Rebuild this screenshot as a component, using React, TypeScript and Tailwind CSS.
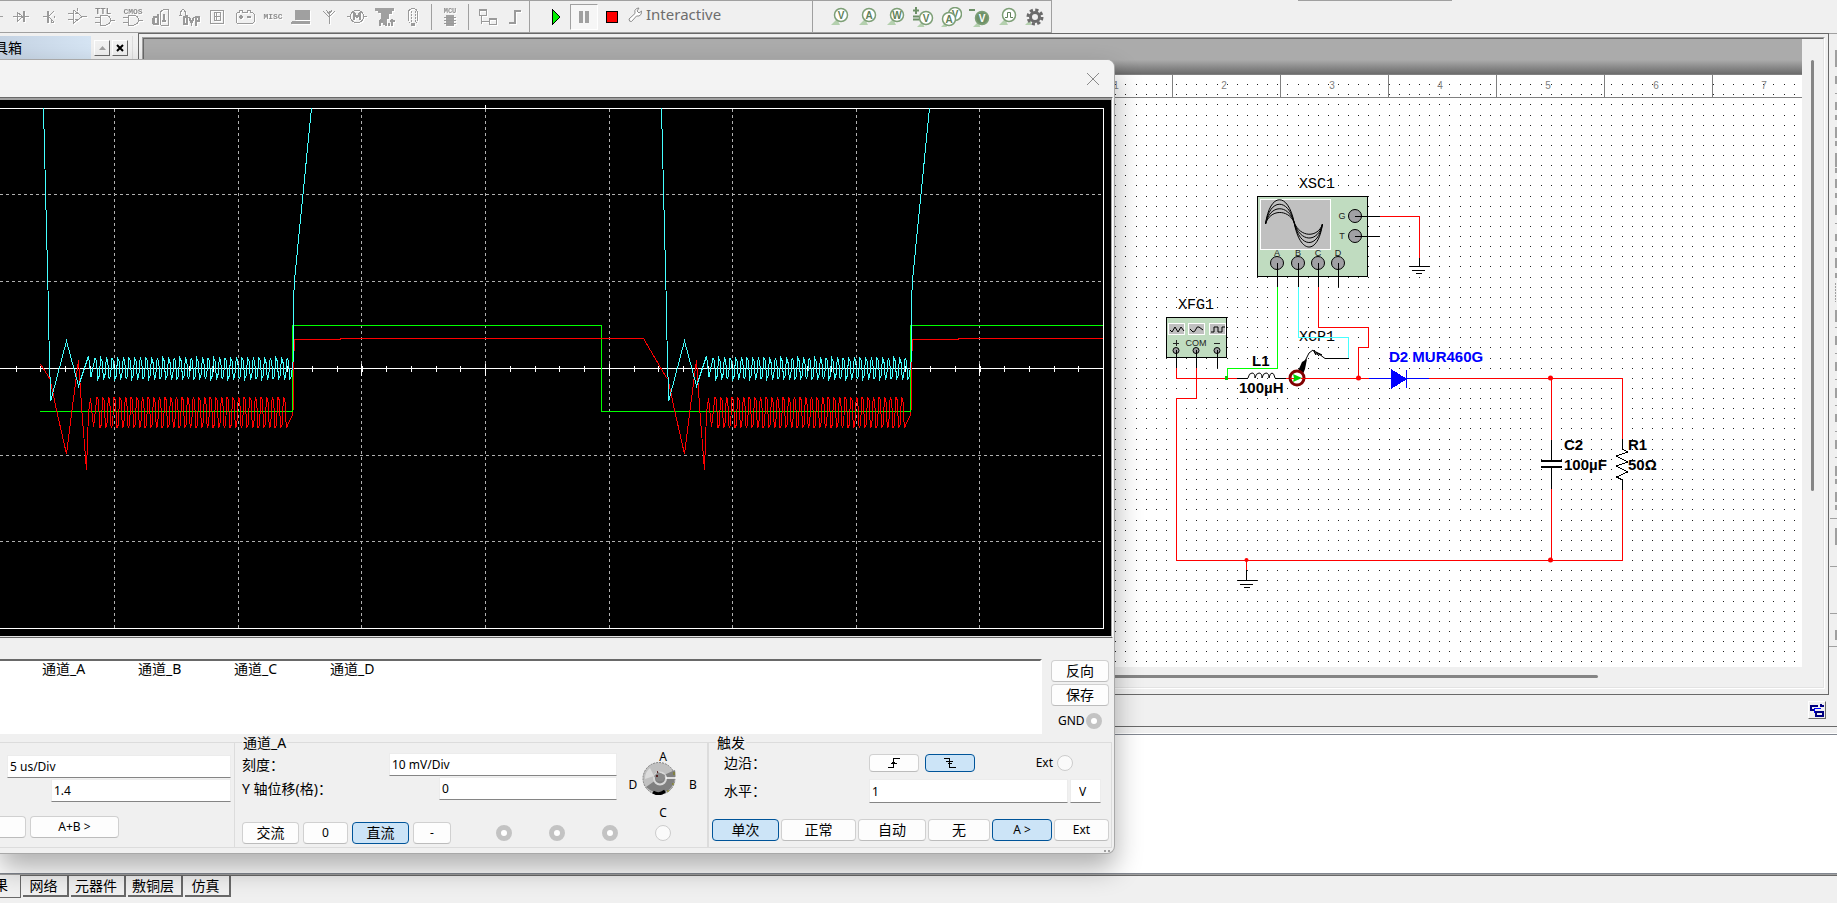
import React from 'react';
import clsx from 'clsx';

/* ---------- Toolbar icons (22 x 20, disabled look) ---------- */

const Glyph = ({ children }: { children: React.ReactNode }) => (
  <svg
    width="22"
    height="20"
    viewBox="0 0 22 20"
    fill="none"
    stroke="#9a9a9a"
    strokeWidth="1"
    shapeRendering="crispEdges"
    className="drop-shadow-[1px_1px_0_#fff]"
  >
    {children}
  </svg>
);

const glyphText = {
  fill: '#8c8c8c',
  stroke: 'none',
  fontFamily: 'Liberation Mono, monospace',
  fontWeight: 700,
  textAnchor: 'middle' as const,
};

const components = [
  {
    name: 'Diode',
    icon: <path d="M3 9.5H19M7.5 5v10M7.5 5.5L13 9.5L7.5 14M13.5 4v11M14.5 4v11" />,
  },
  {
    name: 'Transistor',
    icon: <path d="M5 9.5H10M9.5 4v12M10.5 4v12M11 9L16 4M11 10L16 15M13 12v3h3M16 9v2" />,
  },
  {
    name: 'Analog',
    icon: <path d="M7.5 3v13L16 9.5L7.5 3M2 6.5H7M2 12.5H7M16 9.5H21M9 6.5h2M9 12.5h2M11.5 1v3" />,
  },
  {
    name: 'TTL',
    icon: (
      <>
        <text {...glyphText} x="9" y="7" fontSize="9">TTL</text>
        <path d="M6.5 8v10H12Q16 17 17 13Q16 9 12 8.5H6.5M1 10.5H6M1 15.5H6M17 13.5h4" />
      </>
    ),
  },
  {
    name: 'CMOS',
    icon: (
      <>
        <text {...glyphText} x="11" y="7" fontSize="8">CMOS</text>
        <path d="M6.5 8v10H12Q16 17 17 13Q16 9 12 8.5H6.5M1 10.5H6M1 15.5H6M17 13.5h4" />
      </>
    ),
  },
  {
    name: 'Misc digital',
    icon: (
      <>
        <path d="M10.5 18V5L14 2h4.5V18H10.5" />
        <path d="M4 10h4v7H4ZM8 7v11M14 7v8M12 14h4M3 11v6" strokeWidth="2" />
      </>
    ),
  },
  {
    name: 'Mixed',
    icon: (
      <>
        <path d="M2.5 8V5L5 2L7.5 5v3M1 8.5h3M7 8.5h3" />
        <path d="M6 10h3v7H6ZM11 10l2.500 6L16 10M18 19V10h3v4h-3" strokeWidth="2" />
      </>
    ),
  },
  {
    name: 'Indicator',
    icon: (
      <>
        <rect x="4.500" y="3.500" width="13" height="13" />
        <path d="M8.500 5.500h6v8h-6ZM8.500 9.500h6M10 6v8" />
      </>
    ),
  },
  {
    name: 'Power',
    icon: (
      <>
        <path d="M3.5 5.5h2V3.5h3v2h5V3.5h3v2h2L20 7v8l-1.5 1.5h-15L2 15V7Z" />
        <path d="M5 10h4M7 8v4M13 10h4" strokeWidth="2" />
      </>
    ),
  },
  {
    name: 'Misc',
    icon: <text {...glyphText} x="11" y="12" fontSize="8">MISC</text>,
  },
  {
    name: 'Peripherals',
    icon: (
      <>
        <rect x="5" y="3" width="15" height="10" fill="#a0a0a0" stroke="none" />
        <path d="M2 14h18v3H1Z" fill="#a0a0a0" stroke="none" />
      </>
    ),
  },
  { name: 'RF', icon: <path d="M11.5 17V4M5 4l6 6l6-6M8.5 3.5L11 7l3-3.5" /> },
  {
    name: 'Electromechanical',
    icon: (
      <>
        <circle cx="11" cy="9.500" r="6.500" />
        <path d="M1 9.500h3M18 9.500h3" />
        <path d="M8 13V6l3 4l3-4v7" strokeWidth="2" />
      </>
    ),
  },
  {
    name: 'NI parts',
    icon: (
      <>
        <path d="M1 1h19v3h-2v3h-3v5h-2v6H9v-2H5v-3l2-2V6H4V4H1Z" fill="#a0a0a0" stroke="none" />
        <path d="M6 19v-5h3M12 19v-3M15 19v-3M18 12v7M16 14h5" strokeWidth="2" />
      </>
    ),
  },
  {
    name: 'Connector',
    icon: (
      <>
        <rect x="6.500" y="1.500" width="9" height="15" rx="4" />
        <path d="M9 4v11M13 4v11" strokeDasharray="2 1" />
        <path d="M9 18h4" strokeWidth="2" />
      </>
    ),
  },
];

const McuIcon = () => (
  <Glyph>
    <text {...glyphText} x="11" y="6" fontSize="7">MCU</text>
    <rect x="7" y="8" width="8" height="11" fill="#a0a0a0" stroke="none" />
    <path d="M5 10h12M5 13h12M5 16h12" />
  </Glyph>
);

const HierarchyIcon = () => (
  <Glyph>
    <path d="M3.5 3.5h7v5h-7ZM13.5 12.5h7v5h-7ZM5.5 9v5.5H13M5.5 14.5v2" />
    <path d="M3 3h8M13 12h8" strokeWidth="2" />
  </Glyph>
);

const BusIcon = () => (
  <Glyph>
    <path d="M5 16h6V4h6" strokeWidth="2" />
  </Glyph>
);

const Probe = ({ letter, solid, x = 13, y = 8 }: { letter?: string; solid?: boolean; x?: number; y?: number }) => (
  <>
    <path d={`M${x - 4} ${y + 4}l-6 6h9z`} fill="#b4d0ae" />
    <circle cx={x} cy={y} r="6.500" fill={solid ? '#6e9168' : '#fff'} stroke="#7d9f76" strokeWidth="1.500" />
    {letter && (
      <text x={x} y={y + 4} fontSize="10" fontWeight="700" textAnchor="middle" fill={solid ? '#fff' : '#5f7f59'} fontFamily="Liberation Sans, sans-serif">
        {letter}
      </text>
    )}
  </>
);

const probes = [
  { name: 'Voltage', icon: <Probe letter="V" /> },
  { name: 'Current', icon: <Probe letter="A" /> },
  { name: 'Power', icon: <Probe letter="W" /> },
  {
    name: 'Differential voltage',
    icon: (
      <>
        <path d="M1 3.500h6M4 0v7M1 9.500h6M1 12.500h6" stroke="#6e9168" strokeWidth="2" />
        <Probe letter="V" x={14} y={11} />
      </>
    ),
  },
  {
    name: 'Voltage and current',
    icon: (
      <>
        <Probe letter="V" x={15} y={7} />
        <Probe letter="A" x={9} y={12} />
      </>
    ),
  },
  {
    name: 'Reference voltage',
    icon: (
      <>
        <path d="M1 3h6" stroke="#6e9168" strokeWidth="2" />
        <Probe letter="V" x={14} y={11} solid />
      </>
    ),
  },
  {
    name: 'Digital',
    icon: (
      <>
        <Probe />
        <path d="M9 10.500h2.500v-5h3v5H17" stroke="#5f7f59" fill="none" />
      </>
    ),
  },
  {
    name: 'Probe settings',
    icon: (
      <>
        <path d="M7 12l-6 6h6z" fill="#b4d0ae" />
        <circle cx="11" cy="10" r="7" fill="none" stroke="#6b6b6b" strokeWidth="3" strokeDasharray="3.200 2.300" />
        <circle cx="11" cy="10" r="4.500" fill="#f0f0f0" stroke="#6b6b6b" strokeWidth="3" />
      </>
    ),
  },
];

const ToolButton = ({ label, children }: { label: string; children: React.ReactNode }) => (
  <button type="button" aria-label={label} className="flex h-7 w-7 shrink-0 items-center justify-center">
    {children}
  </button>
);

const Divider = () => <div className="mx-1 h-[26px] w-px shrink-0 bg-[#a0a0a0]" />;

const Toolbar = () => (
  <header className="flex h-[33px] shrink-0 items-start bg-[#f0f0f0]">
    <div className="flex h-full items-center border-y border-[#a0a0a0]">
      <div className="flex h-full items-center">
        <div className="mr-1 h-px w-[3px] bg-[#a0a0a0]" />
        {components.map((item) => (
          <ToolButton key={item.name} label={item.name}>
            <Glyph>{item.icon}</Glyph>
          </ToolButton>
        ))}
        <Divider />
        <ToolButton label="MCU"><McuIcon /></ToolButton>
        <Divider />
        <ToolButton label="Hierarchical block"><HierarchyIcon /></ToolButton>
        <ToolButton label="Bus"><BusIcon /></ToolButton>
      </div>

      {/* Simulation controls */}
      <div className="flex h-full w-[283px] items-center border-l border-[#a0a0a0] pl-3">
        <ToolButton label="Run">
          <svg width="10" height="18" viewBox="0 0 10 18" shapeRendering="crispEdges">
            <path d="M1 1v16L9 9Z" fill="#00f000" stroke="#000" />
          </svg>
        </ToolButton>
        <button type="button" aria-label="Pause" className="flex h-[26px] w-7 items-center justify-center gap-[2px] border border-t-[#a0a0a0] border-r-white border-b-white border-l-[#a0a0a0] bg-[#f6f6f6]">
          <span className="h-3 w-1 bg-[#a0a0a0]" />
          <span className="h-3 w-1 bg-[#a0a0a0]" />
        </button>
        <ToolButton label="Stop">
          <span className="h-3 w-3 border border-black bg-[#ff0000]" />
        </ToolButton>
        <button type="button" className="flex items-center gap-1 pl-[2px] text-[15px] leading-5 text-[#6d6d6d]">
          <svg width="14" height="16" viewBox="0 0 14 16" fill="#fff" stroke="#8c8c8c" className="mb-1">
            <path d="M1 12L7 6.500Q6 3 8.500 1.500L11 1L9 4l2 2l2.500-2Q14 8 11 9H8.500L3.500 14.500Q1 15 1 12Z" />
          </svg>
          <span className="pb-[6px]">Interactive</span>
        </button>
      </div>

      {/* Measurement probes */}
      <div className="flex h-full items-center border-x border-[#a0a0a0] pr-[2px] pl-3">
        {probes.map((probe) => (
          <ToolButton key={probe.name} label={probe.name}>
            <svg width="22" height="20" viewBox="0 0 22 20">{probe.icon}</svg>
          </ToolButton>
        ))}
      </div>
    </div>
    <div className="ml-[246px] h-px w-[154px] bg-[#a0a0a0]" />
  </header>
);

/* ---------- Schematic ---------- */

const STEP = 10.125;

const gridDots = () => {
  let d = '';
  for (let r = -3; r < 60; r++) {
    const y = 115 + Math.floor(r * STEP);
    if (y > 665) break;
    for (let c = -44; c < 26; c++) {
      d += `M${1541 + Math.floor(c * STEP)} ${y}h1v1h-1z`;
    }
  }
  return d;
};

const terminals = [
  { label: 'A', x: 1277 },
  { label: 'B', x: 1298 },
  { label: 'C', x: 1318 },
  { label: 'D', x: 1338 },
];

const Schematic = () => (
  <svg className="block min-h-0 w-full flex-1 bg-white" shapeRendering="crispEdges" fill="none" strokeWidth="1" role="img" aria-label="Schematic">
    <g transform="translate(-144 -74)">
      <path d={gridDots()} fill="#202020" />

      {/* Ruler */}
      <path d="M144 74.500H2400M144 97.500H2400" stroke="#808080" />
      {[1, 2, 3, 4, 5, 6, 7].map((n) => (
        <g key={n}>
          <path d={`M${1064.5 + n * 108} 75v22`} stroke="#808080" />
          <text x={1008 + n * 108} y="89" fontSize="10" textAnchor="middle" fill="#808080" fontFamily="Liberation Sans, sans-serif">{n}</text>
        </g>
      ))}

      {/* Wires */}
      <g stroke="#f00">
        <path d="M1380 216.500H1419.500V258" />
        <path d="M1318.500 287V327.500H1368.500V347.500H1358.500V378" />
        <path d="M1176.500 368V378.500H1237M1196.500 368V398.500H1176.500V560.500H1622.500V490" />
        <path d="M1286 378.500H1369M1429 378.500H1622.500V439M1551.500 378V440M1551.500 489V560" />
        <path d="M1246.500 560V570" />
      </g>
      <path d="M1277.500 287V368.500H1227.500V378" stroke="#0f0" />

      {/* Oscilloscope XSC1 */}
      <rect x="1257.500" y="196.500" width="110" height="80" fill="#c0dcc0" stroke="#000" />
      <rect x="1260.500" y="199.500" width="70" height="50" fill="#c0c0c0" stroke="#fff" />
      {[13, 18, 24, 30].map((a) => (
        <path
          key={a}
          d={`M1265.500 224C1270 ${222 - a} 1288 ${222 - a} 1294 222C1300 ${225 + a} 1318 ${225 + a} 1322.500 224`}
          stroke="#000"
          shapeRendering="auto"
        />
      ))}
      {[{ label: 'G', y: 216 }, { label: 'T', y: 236 }].map((t) => (
        <g key={t.label}>
          <circle cx="1355" cy={t.y} r="6.500" fill="#a0a0a4" stroke="#000" shapeRendering="auto" />
          <path d={`M1355 ${t.y + 0.5}h25`} stroke="#000" />
          <text x="1342" y={t.y + 3} fontSize="9" textAnchor="middle" fill="#222" fontFamily="Liberation Sans, sans-serif">{t.label}</text>
        </g>
      ))}
      {terminals.map((t) => (
        <g key={t.label}>
          <circle cx={t.x} cy="263" r="6.500" fill="#a0a0a4" stroke="#000" shapeRendering="auto" />
          <path d={`M${t.x + 0.5} 263v24`} stroke="#000" />
          <text x={t.x} y="256" fontSize="9" textAnchor="middle" fill="#222" fontFamily="Liberation Sans, sans-serif">{t.label}</text>
        </g>
      ))}
      <path d="M1419.500 258v9M1409 266.500h21M1412 270.500h13M1416 273.500h6" stroke="#000" />

      {/* Function generator XFG1 */}
      <rect x="1166.500" y="317.500" width="60" height="40" fill="#c0dcc0" stroke="#000" />
      {[1168.5, 1188.5, 1209.5].map((x) => (
        <rect key={x} x={x} y="323.500" width="16" height="11" fill="#c0c0c0" stroke="#fff" />
      ))}
      <path d="M1170 330l2 2l3-5l3 5l3-5l3 4M1190 329l3 3q2 0 3-3t3-2l4 3M1211 332h3v-5h4v5h4v-5h3" stroke="#000" shapeRendering="auto" />
      <text x="1196" y="346" fontSize="9" textAnchor="middle" fill="#222" fontFamily="Liberation Sans, sans-serif">COM</text>
      <path d="M1173 343.500h6M1176.500 340v6M1214 343.500h6" stroke="#222" />
      {[1176, 1196, 1217].map((x) => (
        <g key={x}>
          <circle cx={x} cy="350.500" r="3" fill="#a0a0a4" stroke="#000" shapeRendering="auto" />
          <path d={`M${x + 0.5} 350v18`} stroke="#000" />
        </g>
      ))}

      {/* Inductor */}
      <path d="M1237 378.500h11M1275 378.500h11" stroke="#000" />
      <path d="M1248 378q1-5 4-5t3 5q1-5 4-5t3 5q1-5 4-5t3 5q1-5 3-5t3 5" stroke="#000" shapeRendering="auto" />

      {/* Current clamp */}
      <g shapeRendering="auto">
        <path d="M1298 371L1302 362L1307 359L1305 369L1303 374Z" fill="#000" />
        <path d="M1305 361L1309 353L1313 350L1316 355L1314 350L1319 356L1316 352L1322 355L1317 353M1319 354L1325 358.500H1349" stroke="#000" />
        <circle cx="1297" cy="378" r="7" fill="#fff" stroke="#800000" strokeWidth="3" />
        <path d="M1293 374l9 4l-9 4l1-4z" fill="#00d000" />
      </g>
      <path d="M1290 378.500h4M1301 378.500h4" stroke="#f00" />

      {/* Diode D2 */}
      <path d="M1369 378.500h60M1406.500 370v18" stroke="#00f" />
      <path d="M1391 369v20l16-10z" fill="#00f" />

      {/* C2 and R1 */}
      <path d="M1551.500 440v20M1551.500 468v21" stroke="#000" />
      <path d="M1541 461h21M1541 467h21" stroke="#000" strokeWidth="2" />
      <path d="M1622.500 439v10l5 3l-11 4l11 6l-11 4l11 6l-11 5l6 3v10" stroke="#000" />

      {/* Ground */}
      <path d="M1246.500 570v11M1237 580.500h20M1240 584.500h13M1244 587.500h6" stroke="#000" />

      <g fill="#f00" shapeRendering="auto">
        <circle cx="1358.500" cy="378" r="2.500" />
        <circle cx="1550.500" cy="378" r="2.500" />
        <circle cx="1550.500" cy="560" r="2.500" />
        <circle cx="1246.500" cy="560" r="2" />
      </g>
      <circle cx="1226.500" cy="378" r="2" fill="#0c0" />

      {/* Labels */}
      <g fill="#000" fontSize="15" textAnchor="middle" fontFamily="Liberation Mono, monospace">
        <text x="1317" y="188">XSC1</text>
        <text x="1196" y="309">XFG1</text>
        <text x="1317" y="341">XCP1</text>
      </g>
      <path d="M1298.500 287V337.500H1348.500V358" stroke="#4ff" />
      <g fill="#000" fontSize="15" fontWeight="700" fontFamily="Liberation Sans, sans-serif">
        <text x="1252" y="366">L1</text>
        <text x="1239" y="393">100µH</text>
        <text x="1389" y="362" fill="#00f">D2 MUR460G</text>
        <text x="1564" y="450">C2</text>
        <text x="1564" y="470">100µF</text>
        <text x="1628" y="450">R1</text>
        <text x="1628" y="470">50Ω</text>
      </g>
    </g>
  </svg>
);

/* Visible slice of the instrument bar: [top, height] */
const instrumentMarks = [
  [50, 17], [76, 8], [93, 1], [102, 8], [115, 5], [127, 11], [141, 5], [153, 14], [168, 5], [179, 9],
  [193, 5], [205, 10], [223, 1], [234, 7], [247, 5], [258, 10], [273, 5], [310, 12], [327, 1], [336, 9],
  [353, 1], [362, 9], [379, 1], [388, 10], [405, 1], [414, 8], [431, 1], [440, 9], [457, 1], [466, 10],
  [479, 5], [492, 10], [505, 5], [528, 17], [630, 10],
];

const InstrumentBar = () => (
  <div className="w-[9px] shrink-0 border-l border-[#696969] bg-[#f0f0f0]">
    <svg width="8" height="690" viewBox="1829 33 8 690" shapeRendering="crispEdges" className="block">
      {instrumentMarks.map(([y, h]) => (
        <rect key={y} x="1835" y={y} width="2" height={h} fill="#a0a0a0" />
      ))}
      <path d="M1835.500 283v19" stroke="#a0a0a0" strokeDasharray="2 1" />
      <path d="M1829 33.500h8M1830 518h7M1830 566h7M1830 613.500h7M1829 646.500h8" stroke="#a0a0a0" />
    </svg>
  </div>
);

const Workspace = () => (
  <div className="flex h-[661px] flex-auto">
    {/* Toolbox dock */}
    <aside className="w-[139px] shrink-0 border-r border-[#696969] pt-[3px] pr-[5px]">
      <div className="flex h-6 items-center border-r border-[#dcdcdc]">
        <h2 className="mr-[3px] h-full w-[91px] overflow-hidden bg-linear-to-r from-[#c4d2e2] to-[#d5e4f3] text-sm leading-6 whitespace-nowrap">
          <span className="-ml-[6px]">具箱</span>
        </h2>
        <button type="button" aria-label="Collapse" className="mr-[2px] flex h-4 w-4 items-center justify-center border border-t-white border-r-[#696969] border-b-[#696969] border-l-white">
          <svg width="7" height="4" viewBox="0 0 7 4" fill="#a0a0a0"><path d="M0 4h7L3.500 0z" /></svg>
        </button>
        <button type="button" aria-label="Close toolbox" className="flex h-4 w-4 items-center justify-center border border-t-white border-r-[#696969] border-b-[#696969] border-l-white">
          <svg width="8" height="8" viewBox="0 0 8 8" stroke="#000" strokeWidth="2"><path d="M1 1l6 6M7 1l-6 6" /></svg>
        </button>
      </div>
    </aside>

    <main className="flex min-w-0 flex-1 border-t border-b border-[#696969] pt-[3px] pr-[3px] pb-[5px] pl-[3px]">
      <div className="flex min-w-0 flex-1 border border-t-[#a0a0a0] border-r-white border-b-white border-l-[#a0a0a0]">
        <div className="flex min-w-0 flex-1 flex-col border border-t-[#696969] border-r-[#e3e3e3] border-b-[#e3e3e3] border-l-[#696969]">
          <div className="flex min-h-0 flex-1">
            <div className="flex min-w-0 flex-1 flex-col">
              <div className="h-[21px] shrink-0 bg-[#ababab]" />
              <div className="h-[14px] shrink-0 bg-linear-to-b from-[#ababab] to-[#6c6c6c]" />
              <Schematic />
            </div>
            <div className="w-[21px] shrink-0 pt-[21px] pl-[9px]">
              <div className="h-[71%] w-[3px] rounded-full bg-[#858585]" />
            </div>
          </div>
          <div className="h-5 shrink-0 pt-2">
            <div className="h-[3px] w-[1454px] max-w-full rounded-full bg-[#858585]" />
          </div>
        </div>
      </div>
    </main>

    <InstrumentBar />
  </div>
);

/* ---------- Oscilloscope plot ---------- */

const PERIOD = 618;

// ripple between two levels while the switch is closed
const ripple = (from: number, to: number, high: number, low: number) => {
  let d = '';
  for (let x = from; x < to - 3; x += 5.65) {
    d += `L${x.toFixed(1)} ${high}L${(x + 1.4).toFixed(1)} ${high + 3}L${(x + 2.8).toFixed(1)} ${low}L${(x + 4.2).toFixed(1)} ${low - 3}`;
  }
  return d;
};

const cyanBurst =
  'M43.5 108L48 290L49 340L50.7 401L66.5 341L78.5 386L88.5 356L91 377' +
  ripple(95, 293, 358, 379) +
  'L293.4 359L293.6 300L294.4 281L311.5 108';

const redBurst =
  'L50 379L56.5 410L66.5 454L72 410L78.5 360L82 413L86.5 470L88.5 413L90.5 398L93.5 427' +
  ripple(97, 292, 397, 428) +
  'L293 414L293.4 358L295 339.5H340V338.5H643.5';

const Plot = () => {
  const cols = [114, 238, 361, 485, 609, 732, 856, 979];
  const rows = [194, 281, 455, 541];
  const ticks = Array.from({ length: 45 }, (_, i) => Math.round(15.5 + i * 24.72)).filter((x) => x < 1100);

  return (
    <svg className="block h-[536px] w-full bg-black" fill="none" shapeRendering="crispEdges" role="img" aria-label="Oscilloscope traces">
      <g transform="translate(0 -100)">
        <g stroke="#b0b0b0" strokeDasharray="3 3">
          {cols.map((x) => <path key={x} d={`M${x + 0.5} 109V628`} />)}
          {rows.map((y) => <path key={y} d={`M0 ${y + 0.5}H1103`} />)}
        </g>
        <path d="M0 108.500H1103.500V628.500H0M0 368.500H1103M485.500 105v3" stroke="#fff" />
        {ticks.map((x) => <path key={x} d={`M${x + 0.5} 366v6`} stroke="#fff" />)}
        {cols.map((x) => <path key={x} d={`M${x + 0.5} 364v12`} stroke="#fff" />)}

        <path d="M40 411.500H292.500V325.500H601.500V411.500H910.500V325.500H1103" stroke="#0f0" />
        <path d={'M40.5 364' + redBurst + 'L666 377'} stroke="#f00" />
        <clipPath id="screen"><rect x="-618" y="108" width="1103" height="520" /></clipPath>
        <g transform={`translate(${PERIOD} 0)`} clipPath="url(#screen)">
          <path d={'M48 377' + redBurst} stroke="#f00" />
        </g>
        <path d={cyanBurst} stroke="#4ff" />
        <path d={cyanBurst} stroke="#4ff" transform={`translate(${PERIOD} 0)`} />
      </g>
    </svg>
  );
};

/* ---------- Oscilloscope dialog ---------- */

const PushButton = ({ children, active, className, label }: { children?: React.ReactNode; active?: boolean; className?: string; label?: string }) => (
  <button
    type="button"
    aria-label={label}
    aria-pressed={active}
    className={clsx(
      'flex items-center justify-center rounded-[4px] border',
      active ? 'border-[#005499] bg-[#cce4f7]' : 'border-[#d0d0d0] border-b-[#bcbcbc] bg-[#fdfdfd]',
      className
    )}
  >
    {children}
  </button>
);

const field = 'border border-[#ececec] border-b-[#858585] bg-white px-[2px] text-xs outline-none';
const radioOff = 'h-4 w-4 shrink-0 appearance-none rounded-full border-[5px] border-[#c3c3c3] bg-white';
const radioOn = 'h-4 w-4 shrink-0 appearance-none rounded-full border border-[#cccccc] bg-[#fafafa]';

const Knob = () => (
  <svg width="34" height="33" viewBox="0 0 34 33">
    <circle cx="17" cy="16.500" r="16" fill="#c0c0c0" stroke="#808080" strokeDasharray="2 1" />
    <path d="M4 25L14 18Q17 12 22 13L33 8Q35 18 28 27Q17 36 4 25Z" fill="#808080" />
    <path d="M8 6Q3 10 3 17l9-3Z" fill="#dcdcdc" />
    <circle cx="18" cy="16.500" r="6" fill="#808080" stroke="#d8d8d8" strokeWidth="2" />
    <path d="M12 14l4-4l7 3l-2 6h-6z" fill="#8a8a8a" />
    <path d="M24 16h10" stroke="#fff" strokeWidth="1.500" />
    <path d="M11 30q6 4 12-1" stroke="#000" strokeWidth="3" fill="none" />
    <path d="M14 14h2M15 10h1" stroke="#400" strokeWidth="1.500" />
    <path d="M32 10v3M31 21v2M25 29h2" stroke="#808000" />
  </svg>
);

const TimebaseGroup = () => (
  <fieldset className="mt-2 w-[235px] shrink-0 border-y border-r border-[#dcdcdc] pt-3 pr-[3px]">
    <div className="flex justify-end">
      <input aria-label="Timebase scale" defaultValue="5 us/Div" className={clsx(field, 'h-[23px] w-[224px]')} />
    </div>
    <div className="mt-px flex justify-end">
      <input aria-label="Timebase offset" defaultValue="1.4" className={clsx(field, 'h-[23px] w-[180px]')} />
    </div>
    <div className="mt-[14px] flex gap-1">
      <PushButton label="B/A" className="h-[22px] w-[26px] rounded-l-none border-l-0" />
      <PushButton className="h-[22px] w-[89px] text-xs">A+B &gt;</PushButton>
    </div>
  </fieldset>
);

const ChannelGroup = () => (
  <fieldset className="min-w-0 flex-1 border-y border-r border-[#dcdcdc] pr-2 pl-[7px]">
    <legend className="px-px text-sm leading-[17px]">通道_A</legend>
    <div className="flex h-[71px]">
      <div className="min-w-0 flex-1 pt-[2px]">
        <div className="flex items-center justify-between">
          <label htmlFor="scale" className="text-sm leading-[22px]">刻度：</label>
          <input id="scale" defaultValue="10 mV/Div" className={clsx(field, 'h-[23px] w-[228px]')} />
        </div>
        <div className="mt-px flex items-center justify-between">
          <label htmlFor="offset" className="text-sm leading-[22px]">Y 轴位移(格)：</label>
          <input id="offset" defaultValue="0" className={clsx(field, 'h-[23px] w-[178px]')} />
        </div>
      </div>
      <div className="ml-[10px] grid w-[72px] grid-cols-[12px_1fr_12px] items-center justify-items-center pt-px text-xs leading-4">
        <span className="col-span-3 -mt-2">A</span>
        <span>D</span>
        <button type="button" aria-label="Channel selector" className="-mt-3 mr-2"><Knob /></button>
        <span>B</span>
        <span className="col-span-3 -mb-1">C</span>
      </div>
    </div>
    <div className="flex h-[22px] items-center justify-between pr-7">
      <div className="flex gap-1">
        <PushButton className="h-[22px] w-[57px] text-sm">交流</PushButton>
        <PushButton className="h-[22px] w-[45px] text-xs">0</PushButton>
        <PushButton active className="h-[22px] w-[57px] text-sm">直流</PushButton>
        <PushButton className="h-[22px] w-[38px] text-xs">-</PushButton>
      </div>
      <div className="flex gap-[37px]">
        <input type="radio" name="channel" aria-label="Channel 1" disabled className={radioOff} />
        <input type="radio" name="channel" aria-label="Channel 2" disabled className={radioOff} />
        <input type="radio" name="channel" aria-label="Channel 3" disabled className={radioOff} />
        <input type="radio" name="channel" aria-label="Channel 4" className={radioOn} />
      </div>
    </div>
  </fieldset>
);

const TriggerGroup = () => (
  <fieldset className="w-[403px] shrink-0 border border-[#dcdcdc] pr-[2px] pl-[3px]">
    <legend className="ml-1 px-px text-sm leading-[17px]">触发</legend>
    <div className="flex h-6 items-center pl-3">
      <span className="w-[145px] text-sm">边沿：</span>
      <PushButton label="Rising edge" className="mr-[6px] h-[18px] w-[50px]">
        <svg width="12" height="12" viewBox="0 0 12 12" stroke="#000" fill="none" shapeRendering="crispEdges">
          <path d="M0 10.500h5.500V1.500H12M3 6.500h6M4 5.500h3" />
        </svg>
      </PushButton>
      <PushButton label="Falling edge" active className="h-[18px] w-[50px]">
        <svg width="12" height="12" viewBox="0 0 12 12" stroke="#000" fill="none" shapeRendering="crispEdges">
          <path d="M0 1.500h5.500V10.500H12M2 4.500h7M4 6.500h4" />
        </svg>
      </PushButton>
      <label className="mr-9 ml-auto flex items-center gap-1 text-xs">
        Ext
        <input type="radio" name="edgeSource" className={radioOn} />
      </label>
    </div>
    <div className="mt-1 flex h-6 items-center pl-3">
      <label htmlFor="level" className="w-[145px] text-sm">水平：</label>
      <input id="level" defaultValue="1" className={clsx(field, 'h-6 w-[199px]')} />
      <input aria-label="Level unit" defaultValue="V" className={clsx(field, 'ml-[2px] h-6 w-[31px] pl-2')} />
    </div>
    <div className="mt-4 flex gap-[2px]">
      <PushButton active className="h-[22px] w-[67px] text-sm">单次</PushButton>
      <PushButton className="h-[22px] w-[75px] text-sm">正常</PushButton>
      <PushButton className="h-[22px] w-[68px] text-sm">自动</PushButton>
      <PushButton className="h-[22px] w-[62px] text-sm">无</PushButton>
      <PushButton active className="h-[22px] w-[60px] text-xs">A &gt;</PushButton>
      <PushButton className="h-[22px] w-[55px] text-xs">Ext</PushButton>
    </div>
  </fieldset>
);

const Oscilloscope = () => (
  <section
    role="dialog"
    aria-label="Oscilloscope"
    className="absolute top-[59px] right-[722px] left-0 overflow-hidden rounded-r-lg border-t border-r border-b border-[#a8a8a8] bg-[#f0f0f0] shadow-[0_14px_28px_rgba(0,0,0,0.32)]"
  >
    <div className="flex h-[37px] items-center justify-end bg-[#f3f3f3] pr-[14px]">
      <button type="button" aria-label="Close" className="p-px">
        <svg width="12" height="12" viewBox="0 0 12 12" stroke="#8a8a8a"><path d="M0 0l12 12M12 0L0 12" /></svg>
      </button>
    </div>

    <div className="mr-px border-t border-r border-b border-t-[#696969] border-r-white border-b-[#696969]">
      <div className="border-t-2 border-r border-b border-t-[#a0a0a0] border-r-[#a0a0a0] border-b-[#e3e3e3]">
        <Plot />
      </div>
    </div>

    {/* Channel readings */}
    <div className="mt-[21px] flex gap-[9px] pr-[5px]">
      <div className="flex h-[75px] min-w-0 flex-1 border-2 border-t-[#696969] border-r-white border-b-white border-l-0 bg-white pl-[42px] text-sm leading-4">
        {['A', 'B', 'C', 'D'].map((ch) => (
          <span key={ch} className="w-24">通道_{ch}</span>
        ))}
      </div>
      <div className="flex w-[58px] flex-col gap-[2px] pt-px">
        <PushButton className="h-[22px] text-sm">反向</PushButton>
        <PushButton className="h-[22px] text-sm">保存</PushButton>
        <label className="flex items-center gap-px pt-[5px] pl-[7px] text-xs">
          GND
          <input type="radio" disabled className={radioOff} />
        </label>
      </div>
    </div>

    <div className="flex h-[114px] pr-[2px]">
      <TimebaseGroup />
      <ChannelGroup />
      <TriggerGroup />
    </div>
    <div className="flex h-[5px] justify-end">
      <svg width="10" height="5" viewBox="0 0 10 5" fill="#a0a0a0"><path d="M0 2h2v2h-2zM4 2h2v2h-2z" /></svg>
    </div>
  </section>
);

/* ---------- Spreadsheet view ---------- */

const tabs = [
  { name: '网络', width: 'w-[46px]' },
  { name: '元器件', width: 'w-[55px]' },
  { name: '敷铜层', width: 'w-[55px]' },
  { name: '仿真', width: 'w-[46px]' },
];

const Spreadsheet = () => (
  <footer className="shrink-0">
    <div className="flex h-8 items-start justify-end border-b border-[#696969] pt-[6px] pr-[11px]">
      <button type="button" aria-label="Cascade windows" className="border border-t-white border-r-[#696969] border-b-[#696969] border-l-white p-px">
        <svg width="14" height="14" viewBox="0 0 14 14" fill="none" stroke="#000080" strokeWidth="2" shapeRendering="crispEdges">
          <path d="M1 3h7M1 2v5h4M6 9h7v4H6zM11 1v2h3" />
          <path d="M4 10V5.500h7" stroke="#00f" strokeWidth="1" />
        </svg>
      </button>
    </div>
    <div className="h-[7px] border-b border-white" />
    <div className="h-[140px] border-y border-[#828790] bg-white" />
    <div className="border-t border-[#a0a0a0]">
      <nav className="flex h-7 items-start gap-[2px] border-t border-[#696969] text-sm leading-5">
        <button type="button" className="-mt-px flex h-[23px] w-[21px] justify-end overflow-hidden border-r border-b border-[#696969] bg-[#f0f0f0] pr-3">
          果
        </button>
        {tabs.map((tab) => (
          <button key={tab.name} type="button" className={clsx('h-[21px] border-r-2 border-b-2 border-[#696969] pr-[3px] text-center', tab.width)}>
            {tab.name}
          </button>
        ))}
      </nav>
    </div>
  </footer>
);

export default function App() {
  return (
    <div className="relative flex h-screen flex-col overflow-hidden bg-[#f0f0f0] font-['Noto_Sans','Noto_Sans_CJK_SC',sans-serif] text-black">
      <Toolbar />
      <Workspace />
      <Spreadsheet />
      <Oscilloscope />
    </div>
  );
}
